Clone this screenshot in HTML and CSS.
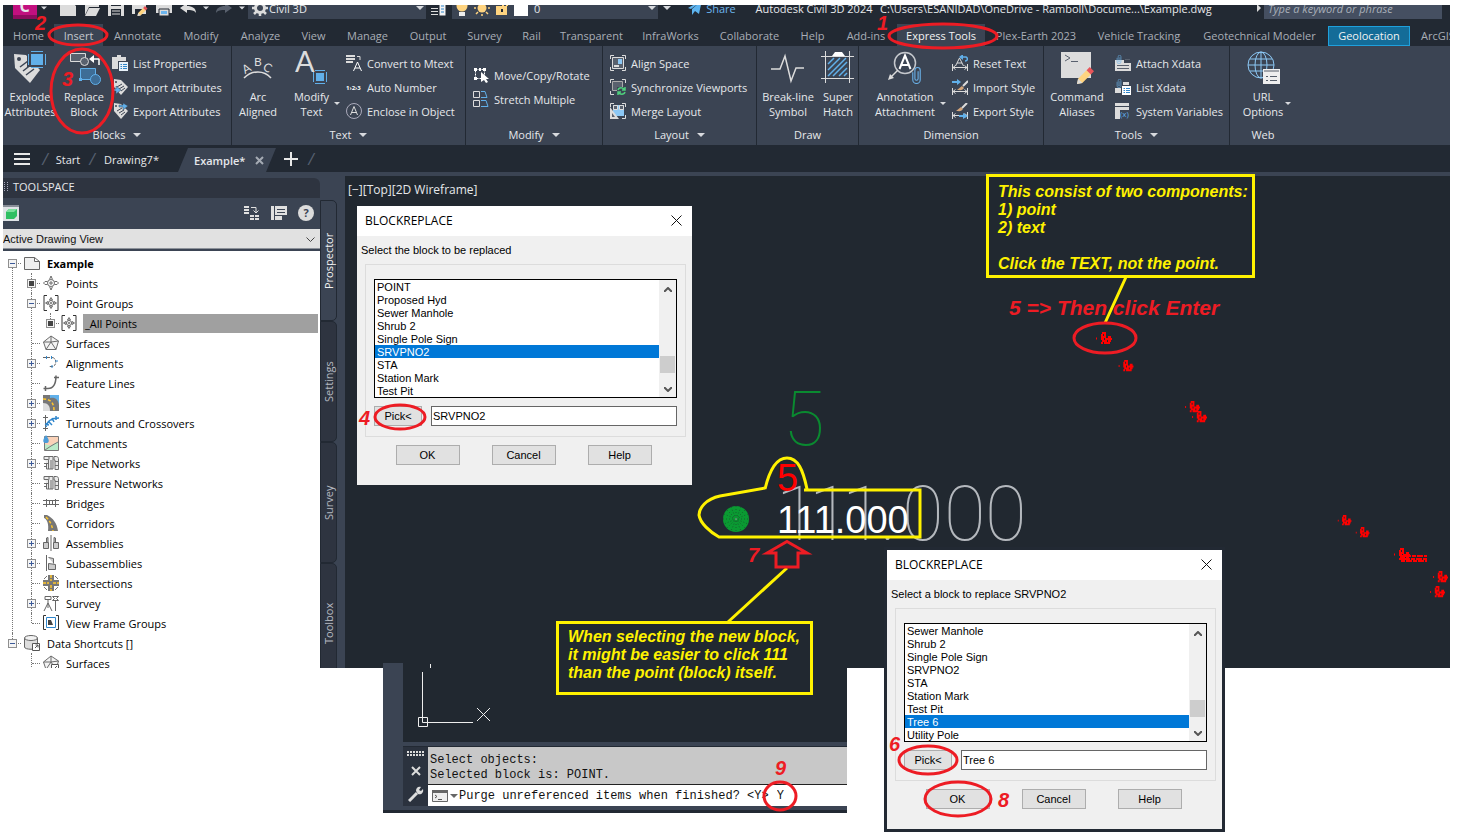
FILE: index.html
```
<!DOCTYPE html>
<html lang="en">
<head>
  <meta charset="UTF-8">
  <title>Autodesk Civil 3D 2024 - Example.dwg</title>
  <link rel="stylesheet" href="styles.css">
</head>
<body>
  <!-- shared icons -->
  <svg class="defs" width="0" height="0">
    <symbol id="i-tri" viewBox="0 0 8 4"><path d="M0 0h8L4 4z" fill="#d8dade"/></symbol>
    <symbol id="i-points" viewBox="0 0 16 16"><g fill="none" stroke="#6b6b6b"><circle cx="8" cy="8" r="3.500"/><path d="M6.500 4.500L8 1l1.500 3.500M6.500 11.500L8 15l1.500-3.500M4.500 6.500H2L.5 8 2 9.500h2.500M11.500 6.500H14L15.500 8 14 9.500h-2.500M8 6v4M6 8h4"/></g></symbol>
    <symbol id="i-group" viewBox="0 0 16 16"><path d="M4 .5H1v15h3M12 .5h3v15h-3" fill="none" stroke="#333"/><g fill="none" stroke="#6b6b6b"><circle cx="8" cy="8" r="2.500"/><path d="M8 2.500L9.500 5h-3zM8 13.500L9.500 11h-3zM2.500 8L5 6.500v3zM13.500 8L11 6.500v3zM8 7v2M7 8h2"/></g></symbol>
    <symbol id="i-surface" viewBox="0 0 16 16"><path d="M8 1l7.500 5L13 14.500H3L.5 7zM8 1v6L3 14.500M8 7l5 7.500M8 7L.5 7M8 7l7.500-1" fill="#f3f3f3" stroke="#6b6b6b"/></symbol>
    <symbol id="i-pipe" viewBox="0 0 16 16"><path d="M1 1.500h9v12.500H3.500V9M1 1.500v3h4.500V14M6 1.500v3M8 5v9M1 8.500h4.500M1 11.500h2.500M11 1.500h2.500c1 0 2 1 2 2v11h-3.500V5H11zM12 6.500h3.500M12 10.500h3.500" fill="#eaeaea" stroke="#6b6b6b"/></symbol>
    <symbol id="i-list" viewBox="0 0 16 16"><path d="M0 2h5V0h4v2h5v4H6v8H0z" fill="#dcdcdc"/><path d="M7 7h9v9H7z" fill="#e8f2fa"/><path d="M8.500 9.500h1.500M11 9.500h4M8.500 11.500h1.500M11 11.500h4M8.500 13.500h1.500M11 13.500h4" stroke="#2f86cc"/></symbol>
    <symbol id="i-tag" viewBox="0 0 16 16"><path d="M2 0l7 1 7 7-7 8-7-8z" fill="#dcdcdc"/><circle cx="4" cy="3" r="1" fill="#3b4453"/><path d="M5 8l5-3M7 10l5-3M9 12l4-3" stroke="#3b4453"/></symbol>
    <symbol id="i-dim" viewBox="0 0 16 16"><path d="M.5 9v7M15.500 9v7M1 12.500h14M3.500 10.500l-2.500 2 2.500 2M12.500 10.500l2.500 2-2.500 2" fill="none" stroke="#dcdcdc"/></symbol>
    <symbol id="i-frame" viewBox="0 0 16 16"><path d="M4 .5H.5V4M12 .5h3.500V4M.5 12v3.500H4M12 15.500h3.500V12" fill="none" stroke="#dcdcdc"/></symbol>
    <symbol id="i-pencil" viewBox="0 0 16 16"><path d="M0 16l1-5 8-8 4 4-8 8z" fill="#ffd480"/><path d="M9 3l3-3 4 4-3 3z" fill="#e8555a"/><path d="M0 16l1-5 4 4z" fill="#dcdcdc"/></symbol>
    <symbol id="i-clip" viewBox="0 0 8 16"><path d="M5.500 4v7a1.500 1.500 0 01-3 0V3a2.500 2.500 0 015 0v9a3.500 3.500 0 01-7 0V5" fill="none" stroke="#6cb5ee"/></symbol>
    <!-- survey points that are too small to read -->
    <symbol id="i-dot" viewBox="0 0 18 14"><path d="M0 6.500h1M6 1h4M5 3h2M8 3h2M5 5h5M12 5h3M5 7h3M9 7h7M6 9h5M12 9h3M5 11h2M8 11h6" stroke="#f00" stroke-width="2"/></symbol>
  </svg>

  <div class="app">
    <header class="titlebar">
      <div class="quick">
        <span class="logo"><b>C</b><svg width="6" height="4"><use href="#i-tri"/></svg></span>
        <button aria-label="New"><svg width="16" height="16"><path d="M0 1h10l6 5v10H0z" fill="#dcdcdc"/></svg></button>
        <button aria-label="Open"><svg width="16" height="16"><path d="M1 3h7l2 2h5v2H5L1 15z" fill="#dcdcdc"/><path d="M5 8h11l-4 8H1z" fill="#dcdcdc"/></svg></button>
        <button aria-label="Save"><svg width="16" height="16"><path d="M0 0h16v16H0z" fill="#dcdcdc"/><path d="M3 0h10v6H3zM3 9h10v7H3z" fill="#222933"/><path d="M4 11h8M4 14h8" stroke="#dcdcdc"/></svg></button>
        <button aria-label="Save As"><svg width="16" height="16"><path d="M0 1h14v13H0z" fill="#dcdcdc"/><path d="M3 9h7v5H3z" fill="#222933"/><use href="#i-pencil" x="5" y="6" width="11" height="10"/></svg></button>
        <button aria-label="Print"><svg width="16" height="16"><path d="M0 5h16v8H0zM3 0h10v4H3z" fill="#dcdcdc"/><path d="M3 9h10v7H3z" fill="#dcdcdc" stroke="#222933"/><path d="M5 11h6v3H5z" fill="#6cb5ee"/></svg></button>
        <button aria-label="Undo"><svg width="16" height="16"><path d="M0 8l7-5v3c5 0 9 2 9 7-2-3-5-3-9-3v3z" fill="#dcdcdc"/></svg></button>
        <svg width="6" height="4"><use href="#i-tri"/></svg>
        <button aria-label="Redo"><svg width="16" height="16"><path d="M16 8L9 3v3C4 6 0 8 0 13c2-3 5-3 9-3v3z" fill="#59616e"/></svg></button>
        <svg width="6" height="4"><use href="#i-tri"/></svg>
        <div class="field"><svg width="16" height="16"><circle cx="8" cy="8" r="4.500" fill="none" stroke="#dcdcdc" stroke-width="3"/><path d="M8 0v4M8 12v4M0 8h4M12 8h4M2 2l3 3M11 11l3 3M14 2l-3 3M5 11l-3 3" stroke="#dcdcdc" stroke-width="2.500"/></svg><span>Civil 3D</span><svg class="end" width="8" height="4"><use href="#i-tri"/></svg></div>
        <svg width="16" height="16"><path d="M0 8.500h7M0 11.500h7M0 14.500h7" stroke="#dcdcdc"/><path d="M8.500 2.500h6v13h-6z" fill="#f4f4f4"/><path d="M10 6h3M10 9h3M10 12h3" stroke="#2f86cc"/></svg>
        <div class="field layer">
          <svg width="12" height="16"><circle cx="6" cy="6" r="5.500" fill="#ffd480"/><path d="M3 12h6v4H3z" fill="#eee"/></svg>
          <svg width="16" height="16"><circle cx="8" cy="8" r="4.500" fill="#ffd480"/><path d="M8 0v2M8 14v2M0 8h2M14 8h2M2 2l2 2M12 12l2 2M14 2l-2 2M4 12l-2 2" stroke="#ffd480" stroke-width="1.500"/></svg>
          <svg width="12" height="16"><path d="M0 6h11v9H0z" fill="#ffd480"/><path d="M7 6V2h4v4" fill="none" stroke="#ffd480" stroke-width="2"/><path d="M5 9h2v3H5z" fill="#222933"/></svg>
          <i class="swatch"></i><span>0</span><svg class="end" width="8" height="4"><use href="#i-tri"/></svg>
        </div>
        <svg width="8" height="4"><use href="#i-tri"/></svg>
        <a class="share" href="#share"><svg width="14" height="16"><path d="M0 8L14 0l-3 14-4-3-3 4V9l7-6-8 6z" fill="#5db4f0"/></svg>Share</a>
        <span>Autodesk Civil 3D 2024</span>
        <span class="path">C:\Users\ESANIDAD\OneDrive - Ramboll\Docume...\Example.dwg</span>
        <svg width="4" height="8"><path d="M0 0v8l4-4z" fill="#dcdcdc"/></svg>
        <input class="search" type="text" placeholder="Type a keyword or phrase" aria-label="Search">
      </div>
    </header>

    <nav class="tabs">
      <a href="#home">Home</a>
      <a href="#insert" class="on dim">Insert</a>
      <a href="#annotate">Annotate</a>
      <a href="#modify">Modify</a>
      <a href="#analyze">Analyze</a>
      <a href="#view">View</a>
      <a href="#manage">Manage</a>
      <a href="#output">Output</a>
      <a href="#survey">Survey</a>
      <a href="#rail">Rail</a>
      <a href="#transparent">Transparent</a>
      <a href="#infraworks">InfraWorks</a>
      <a href="#collaborate">Collaborate</a>
      <a href="#help">Help</a>
      <a href="#addins">Add-ins</a>
      <a href="#express" class="on">Express Tools</a>
      <a href="#plex">Plex-Earth 2023</a>
      <a href="#vehicle">Vehicle Tracking</a>
      <a href="#geotech">Geotechnical Modeler</a>
      <a href="#geolocation" class="geo">Geolocation</a>
      <a href="#arcgis" class="last">ArcGIS</a>
    </nav>

    <div class="ribbon">
      <section class="panel blocks">
        <div class="tools">
          <button class="big"><svg width="34" height="34"><path d="M1 3l12 1 14 15-10 13L2 17z" fill="#dcdcdc"/><circle cx="6" cy="8" r="2" fill="#3b4453"/><path d="M7 16l8-6M10 20l9-7M13 24l8-6" stroke="#3b4453" stroke-width="1.500"/><path d="M14 1h20v15H14z" fill="#3b4453"/><path d="M18 3h12v11H18z" fill="#61b0ea"/><path d="M18 .5h12M18 16.500h12M15.500 3v11M32.500 3v11" stroke="#61b0ea"/></svg><span>Explode<br>Attributes</span></button>
          <button class="big"><svg width="34" height="34"><g fill="#59616e" stroke="#dcdcdc"><path d="M3.500 2.500h15v8h-15z"/><circle cx="17.500" cy="10.500" r="4"/></g><path d="M32 14V8h-7" fill="none" stroke="#fff" stroke-width="1.500"/><path d="M22 8l5-4v8z" fill="#fff"/><g fill="#3e6d96" stroke="#61b0ea"><path d="M13.500 17.500h15v11h-15z"/><circle cx="28.500" cy="28.500" r="5"/></g><path d="M12 27h3v3h-3z" fill="#61b0ea"/></svg><span>Replace<br>Block</span></button>
          <div class="list">
            <button><svg width="16" height="16"><use href="#i-list"/></svg>List Properties</button>
            <button><svg width="16" height="16"><use href="#i-tag"/><path d="M0 10h4V7l5 4-5 4v-3H0z" fill="#61b0ea" stroke="#3b4453" stroke-width=".5"/></svg>Import Attributes</button>
            <button><svg width="16" height="16"><use href="#i-tag"/><path d="M7 2h4V0l5 3-5 4V4H7z" fill="#61b0ea" stroke="#3b4453" stroke-width=".5"/></svg>Export Attributes</button>
          </div>
        </div>
        <h2>Blocks <svg width="8" height="4"><use href="#i-tri"/></svg></h2>
      </section>
      <section class="panel text">
        <div class="tools">
          <button class="big"><svg width="34" height="34"><path d="M3 27c8-8 20-8 27 0" fill="none" stroke="#dcdcdc" stroke-width="1.500"/><g fill="#dcdcdc" font-family="Lato" font-size="12"><text x="1" y="22" transform="rotate(-30 5 17)">A</text><text x="13" y="15">B</text><text x="23" y="21" transform="rotate(30 27 16)">C</text></g></svg><span>Arc<br>Aligned</span></button>
          <button class="big more"><svg width="34" height="34"><text x="0" y="21" fill="#dcdcdc" font-family="Lato" font-size="29">A</text><path d="M21 22h8v8h-8z" fill="#61b0ea"/><path d="M20 19.500h10M20 32.500h10M18.500 21v10M31.500 21v10" stroke="#61b0ea"/></svg><span>Modify<br>Text</span></button>
          <div class="list">
            <button><svg width="16" height="16"><path d="M0 1h9M0 4h9M0 7h7" stroke="#dcdcdc" stroke-width="2"/><path d="M11 1.500h3V5" stroke="#dcdcdc" fill="none"/><path d="M7.500 16l4-9 4 9M9 13h5" stroke="#fff" fill="none"/></svg>Convert to Mtext</button>
            <button><svg width="16" height="16"><text x="0" y="11" fill="#fff" font-family="Open Sans" font-weight="bold" font-size="6">1›2›3</text></svg>Auto Number</button>
            <button><svg width="16" height="16"><circle cx="8" cy="8" r="7.500" fill="none" stroke="#aab"/><path d="M4.500 12L8 3.500l3.500 8.500M6 9.500h4" fill="none" stroke="#dcdcdc"/></svg>Enclose in Object</button>
          </div>
        </div>
        <h2>Text <svg width="8" height="4"><use href="#i-tri"/></svg></h2>
      </section>
      <section class="panel modify">
        <div class="tools">
          <div class="list">
            <button><svg width="16" height="16"><path d="M2.500 2.500h9v9h-9z" fill="none" stroke="#fff" stroke-dasharray="2 1"/><path d="M1 1h3v3H1zM6 1h2v3H6zM10 1h3v3h-3zM1 10h3v3H1z" fill="#fff"/><path d="M8 5v10l3-2 2 3 2-1-2-3h3z" fill="#fff"/></svg>Move/Copy/Rotate</button>
            <button><svg width="16" height="16"><path d="M.5.5h6v6h-6zM.5 9.500h6v6h-6z" fill="none" stroke="#dcdcdc"/><path d="M8 .5h4l2 6H8M8 9.500h5l2 6H8" fill="none" stroke="#61b0ea"/></svg>Stretch Multiple</button>
          </div>
        </div>
        <h2>Modify <svg width="8" height="4"><use href="#i-tri"/></svg></h2>
      </section>
      <section class="panel layout">
        <div class="tools">
          <div class="list">
            <button><svg width="16" height="16"><use href="#i-frame"/><path d="M2.500 2.500h11v11h-11z" fill="#59616e" stroke="#dcdcdc"/><path d="M8 4h4v5H8z" fill="#8cc8f5"/><path d="M4 10h5v2H4z" fill="#dcdcdc"/></svg>Align Space</button>
            <button><svg width="16" height="16"><use href="#i-frame"/><path d="M2.500 2.500h10v9h-10z" fill="#59616e" stroke="#aaa"/><path d="M7 8h9v8H7z" fill="#3b4453"/><path d="M8 11c1-3 5-3 7 0M15 8v3h-3M15 13c-1 3-5 3-7 0M8 16v-3h3" fill="none" stroke="#4fd07d" stroke-width="1.500"/></svg>Synchronize Viewports</button>
            <button><svg width="16" height="16"><use href="#i-frame"/><path d="M3 2h11v11H3z" fill="#8cc8f5"/><path d="M3.500 2.500h4v4h-4zM9.500 2.500h4v4h-4z" fill="#59616e" stroke="#dcdcdc"/><path d="M0 4v12h9z" fill="#dcdcdc"/><path d="M2 10v4h3z" fill="#59616e"/></svg>Merge Layout</button>
          </div>
        </div>
        <h2>Layout <svg width="8" height="4"><use href="#i-tri"/></svg></h2>
      </section>
      <section class="panel draw">
        <div class="tools">
          <button class="big"><svg width="34" height="34"><path d="M0 18h9l5-13 6 25 5-13h8" fill="none" stroke="#dcdcdc" stroke-width="1.500"/></svg><span>Break-line<br>Symbol</span></button>
          <button class="big"><svg width="34" height="34"><path d="M4.500 0v32M28.500 0v32M0 5.500h33M0 27.500h33" stroke="#dcdcdc"/><path d="M7 13l6-6M7 19L19 7M7 25L25 7M12 25L26 11M18 25l8-8M23 25l3-3" stroke="#61b0ea" stroke-width="1.500"/><path d="M11 5l3-4h7l3 4z" fill="#fff"/></svg><span>Super<br>Hatch</span></button>
        </div>
        <h2>Draw</h2>
      </section>
      <section class="panel dimension">
        <div class="tools">
          <button class="big more"><svg width="34" height="34"><circle cx="17" cy="12" r="10.500" fill="none" stroke="#c5c8cd" stroke-width="1.500"/><path d="M11.500 18L17 4.500 22.500 18M13.500 14h7" fill="none" stroke="#fff" stroke-width="2"/><path d="M10 19L3 26" stroke="#dcdcdc" stroke-width="1.500"/><path d="M0 29l2-6 4 4z" fill="#dcdcdc"/><use href="#i-clip" x="24" y="16" width="9" height="17"/></svg><span>Annotation<br>Attachment</span></button>
          <div class="list">
            <button><svg width="16" height="16"><use href="#i-dim"/><path d="M3.500 11l4-8 4 8M5 8h5" stroke="#dcdcdc" fill="none"/><path d="M9 2h5c2 1 2 4-1 4" stroke="#61b0ea" fill="none" stroke-width="1.500"/><path d="M7 2l4-3v6z" fill="#61b0ea"/></svg>Reset Text</button>
            <button><svg width="16" height="16"><use href="#i-dim"/><path d="M0 2h5V0l4 3-4 3V4H0z" fill="#61b0ea"/><path d="M5 11l5-4 2 2c-2 3-4 2-7 2z" fill="#d6a67a"/><path d="M11 7l5-5" stroke="#dcdcdc" stroke-width="2"/></svg>Import Style</button>
            <button><svg width="16" height="16"><use href="#i-dim"/><path d="M4 8l5-4 2 2c-2 3-4 2-7 2z" fill="#d6a67a"/><path d="M10 5l5-5" stroke="#dcdcdc" stroke-width="2"/><path d="M7 12h4v-2l5 3-5 3v-2H7z" fill="#61b0ea"/></svg>Export Style</button>
          </div>
        </div>
        <h2>Dimension</h2>
      </section>
      <section class="panel toolset">
        <div class="tools">
          <button class="big"><svg width="34" height="34"><path d="M1 1h30v26H1z" fill="#dcdcdc"/><path d="M5 4l5 3-5 3M11 10.500h7" fill="none" stroke="#59616e"/><use href="#i-pencil" x="17" y="16" width="17" height="17"/></svg><span>Command<br>Aliases</span></button>
          <div class="list">
            <button><svg width="16" height="16"><path d="M0 5h9v3h7v8H0z" fill="#dcdcdc"/><path d="M2 10.500h12M2 13.500h12M10 4.500h5" stroke="#59616e"/><use href="#i-clip" x="1" width="6" height="9"/></svg>Attach Xdata</button>
            <button><svg width="16" height="16"><path d="M0 9h6v5H0zM8 3h6v3H8z" fill="#dcdcdc"/><use href="#i-clip" x="1" width="6" height="9"/><path d="M7 7h9v9H7z" fill="#fff"/><path d="M8.500 9.500h1.500M11 9.500h4M8.500 11.500h1.500M11 11.500h4M8.500 13.500h1.500M11 13.500h4" stroke="#2f86cc"/></svg>List Xdata</button>
            <button><svg width="16" height="16"><path d="M0 0h14v3H0zM0 4h14v3H5v9H0z" fill="#dcdcdc"/><text x="5" y="14" fill="#61b0ea" font-family="Open Sans" font-size="8">(x)</text></svg>System Variables</button>
          </div>
        </div>
        <h2>Tools <svg width="8" height="4"><use href="#i-tri"/></svg></h2>
      </section>
      <section class="panel web">
        <div class="tools">
          <button class="big more"><svg width="34" height="34"><g fill="none" stroke="#8cc8f5"><circle cx="15" cy="14" r="13"/><ellipse cx="15" cy="14" rx="6" ry="13"/><path d="M15 1v26M2 14h26M4 8h22M4 20h22"/></g><path d="M17 18h17v15H17z" fill="#eee"/><path d="M18 20h15M20 25.500h2M24 25.500h7M20 29.500h2M24 29.500h7" stroke="#555d69"/></svg><span>URL<br>Options</span></button>
        </div>
        <h2>Web</h2>
      </section>
    </div>

    <nav class="files">
      <button aria-label="Menu"><svg width="16" height="12"><path d="M0 1h16M0 6h16M0 11h16" stroke="#e8e8e8" stroke-width="2"/></svg></button>
      <i>/</i>
      <a href="#start">Start</a>
      <i>/</i>
      <a href="#drawing7" class="d7">Drawing7*</a>
      <a href="#example" class="current">Example* <svg width="9" height="9"><path d="M1 1l7 7M8 1L1 8" stroke="#a5abb4" stroke-width="2"/></svg></a>
      <button aria-label="New drawing"><svg width="14" height="14"><path d="M7 0v14M0 7h14" stroke="#e8e8e8" stroke-width="2"/></svg></button>
      <i>/</i>
    </nav>

    <main class="work">
      <aside class="toolspace">
        <h1><svg width="5" height="10"><path d="M1.500 0v10M4.500 0v10" stroke="#aab" stroke-dasharray="1 1"/></svg>TOOLSPACE</h1>
        <div class="bar">
          <svg width="16" height="16"><path d="M0 0h16v2H0z" fill="#888e98"/><path d="M0 2h16v14H0z" fill="#dfe3e6"/><path d="M3 7l3-3h8v7l-3 3H3z" fill="#2fbf63"/><path d="M3 7l3-3h8l-3 3z" fill="#7be09d"/></svg>
          <span class="grow"></span>
          <button aria-label="Panorama"><svg width="16" height="16"><path d="M0 2h5M0 5h5M0 8h5M6 11h4M11 11h4M6 14h4M11 14h4" stroke="#e0e0e0" stroke-width="2"/><path d="M7 2.500h5V8M9.500 5.500l2.500 2.500 2.500-2.500" stroke="#e0e0e0" fill="none"/></svg></button>
          <button aria-label="Preview"><svg width="16" height="16"><path d="M0 1h3v14H0zM4 1h12v9H4zM4 11h8v4H4z" fill="#e0e0e0"/><path d="M6 4.500h8M6 7.500h8M11.500 10v5" stroke="#3b4453"/></svg></button>
          <button class="help" aria-label="Help">?</button>
        </div>
        <div class="view"><select aria-label="View"><option>Active Drawing View</option></select><svg width="9" height="5"><path d="M.5.5l4 4 4-4" fill="none" stroke="#444"/></svg></div>
        <ul class="tree">
          <li><div class="row"><i class="tg minus"></i><svg width="16" height="16"><path d="M.5 2.500h10l5 4v8H.5zM10.500 2.500v4h5" fill="#f0f0f0" stroke="#666"/></svg><b>Example</b></div>
            <ul>
              <li><div class="row"><i class="tg dot"></i><svg width="16" height="16"><use href="#i-points"/></svg>Points</div></li>
              <li><div class="row"><i class="tg minus"></i><svg width="16" height="16"><use href="#i-group"/></svg>Point Groups</div>
                <ul>
                  <li><div class="row picked"><i class="tg dot"></i><svg width="16" height="16"><use href="#i-group"/></svg><span>_All Points</span></div></li>
                </ul>
              </li>
              <li><div class="row"><i class="tg"></i><svg width="16" height="16"><use href="#i-surface"/></svg>Surfaces</div></li>
              <li><div class="row"><i class="tg plus"></i><svg width="16" height="16"><path d="M0 2.500h9M9 2.500c5 0 5 9 0 9H6" fill="none" stroke="#666" stroke-dasharray="3 1"/><path d="M3.500 1v3M8.500 1v3M12 6h3M9 10v3" stroke="#2f86cc"/></svg>Alignments</div></li>
              <li><div class="row"><i class="tg"></i><svg width="16" height="16"><path d="M2 13.500h3c6 0 8-6 8-13M.5 13.500h4M11 2.500h5M2.500 11v5" fill="none" stroke="#666" stroke-width="1.500"/></svg>Feature Lines</div></li>
              <li><div class="row"><i class="tg plus"></i><svg width="16" height="16"><path d="M0 0h16v16H0z" fill="#777"/><path d="M7 0h9v10c-1-6-4-8-9-7z" fill="#61b0ea"/><path d="M0 8c5 0 7 3 7 8H0z" fill="#ddd"/><path d="M0 4c8 0 11 4 11 12" fill="none" stroke="#ffc62b" stroke-width="1.500" stroke-dasharray="3 2"/></svg>Sites</div></li>
              <li><div class="row"><i class="tg plus"></i><svg width="16" height="16"><path d="M2.500 0v16M0 2.500h5M0 13.500h5" stroke="#666"/><path d="M3 12c1-6 5-9 13-9M5 6l4 4M9 3l2 4M13 1v4M2 9l4 1" fill="none" stroke="#2f86cc" stroke-width="1.500"/></svg>Turnouts and Crossovers</div></li>
              <li><div class="row"><i class="tg"></i><svg width="16" height="16"><path d="M1.500 1.500h14v14h-14z" fill="#fad2b8" stroke="#777"/><path d="M2 15V9c4 2 4 0 6 2 3-3 5-4 7-4v8z" fill="#b9ecc9"/><path d="M2 15l6-4 7-4" stroke="#777" fill="none"/><path d="M3 0c5 7 2 8 0 8s-5-1 0-8z" fill="#4b9cd8"/></svg>Catchments</div></li>
              <li><div class="row"><i class="tg plus"></i><svg width="16" height="16"><use href="#i-pipe"/></svg>Pipe Networks</div></li>
              <li><div class="row"><i class="tg"></i><svg width="16" height="16"><use href="#i-pipe"/></svg>Pressure Networks</div></li>
              <li><div class="row"><i class="tg"></i><svg width="16" height="16"><path d="M0 5.500h16M0 9.500h16M3.500 4v8M12.500 4v8M6.500 6v3M9.500 6v3" stroke="#666"/></svg>Bridges</div></li>
              <li><div class="row"><i class="tg"></i><svg width="16" height="16"><path d="M1 0h3c6 3 10 8 11 16H5C6 9 4 4 1 3z" fill="#777"/><path d="M3 2c4 4 6 8 7 14" fill="none" stroke="#ffc62b" stroke-width="1.500" stroke-dasharray="3 2"/></svg>Corridors</div></li>
              <li><div class="row"><i class="tg plus"></i><svg width="16" height="16"><path d="M8 0v16" stroke="#666"/><path d="M.5 7.500h5v6h-5zM10.500 7.500h5v6h-5zM5 7.500v-5L3.500 3v4M11 7.500v-5l1.500.5v4" fill="#ccc" stroke="#666"/></svg>Assemblies</div></li>
              <li><div class="row"><i class="tg plus"></i><svg width="16" height="16"><path d="M3.500 0v16" stroke="#666"/><path d="M5.500 8.500l7 1v5h-7zM5.500 2.500l5 1v5" fill="#ccc" stroke="#666"/></svg>Subassemblies</div></li>
              <li><div class="row"><i class="tg"></i><svg width="16" height="16"><path d="M5 0h6v5h5v6h-5v5H5v-5H0V5h5z" fill="#777"/><path d="M0 8h6M10 8h6M8 0v6M8 10v6" stroke="#ffc62b" stroke-width="1.500" stroke-dasharray="3 1"/><path d="M1 4l3-3M12 1l3 3M1 12l3 3M12 15l3-3" stroke="#777"/></svg>Intersections</div></li>
              <li><div class="row"><i class="tg plus"></i><svg width="16" height="16"><path d="M2 1.500h6v3H2zM5 5v3M5 8L1 16M5 8l4 8M5 8v5M9.500 1.500h6l-2 2 2 2h-6l2-2zM12.500 6v10" fill="none" stroke="#666"/></svg>Survey</div></li>
              <li><div class="row"><i class="tg"></i><svg width="16" height="16"><path d="M3 .5H.5v14H3M13 .5h2.500v14H13" fill="none" stroke="#333"/><path d="M3.500 2.500h9v10h-9z" fill="#fff" stroke="#2f86cc"/><path d="M5 5h3l2 5H5z" fill="#444"/></svg>View Frame Groups</div></li>
            </ul>
          </li>
          <li><div class="row"><i class="tg minus"></i><svg width="16" height="16"><path d="M.5 3v9c0 3 13 3 13 0V3" fill="#ddd" stroke="#666"/><ellipse cx="7" cy="3" rx="6.500" ry="2.500" fill="#f2f2f2" stroke="#666"/><path d="M8.500 8.500h7v7h-7zM11 13l3-3M11.500 10H14v2.500" fill="#fff" stroke="#555"/></svg>Data Shortcuts []</div>
            <ul>
              <li class="more-below"><div class="row"><i class="tg"></i><svg width="16" height="16"><use href="#i-surface"/><path d="M8.500 9.500h7v7h-7zM11 14l3-3" fill="#fff" stroke="#555"/></svg>Surfaces</div></li>
            </ul>
          </li>
        </ul>
      </aside>
      <nav class="side">
        <a href="#prospector" class="on">Prospector</a>
        <a href="#settings">Settings</a>
        <a href="#survey-tab">Survey</a>
        <a href="#toolbox">Toolbox</a>
      </nav>
      <div class="canvas"><p>[&#8722;][Top][2D Wireframe]</p></div>
    </main>
  </div>

  <section class="command">
    <div class="model"></div>
    <div class="cmd">
      <div class="grip">
        <svg width="18" height="5"><path d="M0 1h18M0 4h18" stroke="#dcdcdc" stroke-width="2" stroke-dasharray="2 1"/></svg>
        <button aria-label="Close"><svg width="10" height="10"><path d="M1 1l8 8M9 1L1 9" stroke="#dcdcdc" stroke-width="2"/></svg></button>
        <button aria-label="Customize"><svg width="16" height="16"><path d="M1 15L9 7" stroke="#dcdcdc" stroke-width="3"/><path d="M8 5c0-3 2-5 5-4l-2 3 2 1 2-2c1 4-2 6-5 5z" fill="#dcdcdc"/></svg></button>
      </div>
      <div class="console">
        <p>Select objects:<br>Selected block is: POINT.</p>
        <form class="prompt">
          <svg width="26" height="12"><path d="M.5.5h15v11H.5z" fill="#eee" stroke="#666"/><path d="M0 0h16v3H0z" fill="#666"/><path d="M3 5l2 1.500L3 8M6 9.500h4" stroke="#555" fill="none"/><path d="M18 4h8l-4 4z" fill="#666"/></svg>
          <label for="answer">Purge unreferenced items when finished? &lt;Y&gt;</label>
          <input id="answer" type="text" value="Y">
        </form>
      </div>
    </div>
    <div class="status"></div>
  </section>

  <form class="dialog first">
    <header>BLOCKREPLACE <button type="button" aria-label="Close"><svg width="11" height="11"><path d="M.5.5l10 10M10.500.5l-10 10" stroke="#111"/></svg></button></header>
    <label for="blocks1">Select the block to be replaced</label>
    <fieldset>
      <div class="listbox">
        <select id="blocks1" size="9">
          <option>POINT</option>
          <option>Proposed Hyd</option>
          <option>Sewer Manhole</option>
          <option>Shrub 2</option>
          <option>Single Pole Sign</option>
          <option selected>SRVPNO2</option>
          <option>STA</option>
          <option>Station Mark</option>
          <option>Test Pit</option>
        </select>
        <div class="scroll"><svg width="8" height="5"><path d="M0 5l4-4 4 4" fill="none" stroke="#555" stroke-width="2"/></svg><i></i><svg width="8" height="5"><path d="M0 0l4 4 4-4" fill="none" stroke="#555" stroke-width="2"/></svg></div>
      </div>
      <div class="pick"><button type="button">Pick&lt;</button><input type="text" value="SRVPNO2" aria-label="Block name"></div>
    </fieldset>
    <div class="actions"><button type="button">OK</button><button type="button">Cancel</button><button type="button">Help</button></div>
  </form>

  <form class="dialog second">
    <header>BLOCKREPLACE <button type="button" aria-label="Close"><svg width="11" height="11"><path d="M.5.5l10 10M10.500.5l-10 10" stroke="#111"/></svg></button></header>
    <label for="blocks2">Select a block to replace SRVPNO2</label>
    <fieldset>
      <div class="listbox">
        <select id="blocks2" size="9">
          <option>Sewer Manhole</option>
          <option>Shrub 2</option>
          <option>Single Pole Sign</option>
          <option>SRVPNO2</option>
          <option>STA</option>
          <option>Station Mark</option>
          <option>Test Pit</option>
          <option selected>Tree 6</option>
          <option>Utility Pole</option>
        </select>
        <div class="scroll"><svg width="8" height="5"><path d="M0 5l4-4 4 4" fill="none" stroke="#555" stroke-width="2"/></svg><i></i><svg width="8" height="5"><path d="M0 0l4 4 4-4" fill="none" stroke="#555" stroke-width="2"/></svg></div>
      </div>
      <div class="pick"><button type="button">Pick&lt;</button><input type="text" value="Tree 6" aria-label="Block name"></div>
    </fieldset>
    <div class="actions"><button type="button">OK</button><button type="button">Cancel</button><button type="button">Help</button></div>
  </form>

  <p class="callout one">This consist of two components:<br>1) point<br>2) text<br><br>Click the TEXT, not the point.</p>
  <p class="callout two">When selecting the new block,<br>it might be easier to click 111<br>than the point (block) itself.</p>

  <!-- drawing content and the step marks over it -->
  <svg class="marks" width="1457" height="837">
    <g class="thin">
      <text class="green" x="783" y="445">5</text>
      <text x="776 809 842" y="540">111</text>
      <text x="880 902 944 985" y="540">.000</text>
    </g>
    <circle cx="736" cy="519" r="13" fill="#0a9a32"/>
    <path d="M736 506v26M723 519h26M727 510l18 18M745 510l-18 18M731 507l10 24M741 507l-10 24M724 514l24 10M748 514l-24 10" stroke="#16602f" stroke-dasharray="1 2"/>
    <path d="M735.500 519h1" stroke="#fff"/>
    <text class="plain" x="777" y="491" fill="#f00">5</text>
    <text class="plain" x="777" y="533" fill="#fff">111.000</text>

    <use href="#i-dot" x="1096" y="332" width="18" height="14"/>
    <use href="#i-dot" x="1118" y="360" width="18" height="13"/>
    <use href="#i-dot" x="1185" y="401" width="17" height="13"/>
    <use href="#i-dot" x="1192" y="411" width="17" height="13"/>
    <use href="#i-dot" x="1337" y="515" width="17" height="12"/>
    <use href="#i-dot" x="1355" y="527" width="17" height="12"/>
    <use href="#i-dot" x="1394" y="548" width="18" height="14"/>
    <path d="M1400 556h27M1399 559h29M1401 561h26" stroke="#f00" stroke-width="2" stroke-dasharray="4 1 6 1"/>
    <use href="#i-dot" x="1433" y="571" width="17" height="13"/>
    <use href="#i-dot" x="1430" y="586" width="17" height="13"/>

    <g fill="none" stroke="#eee">
      <path d="M418.500 717.500h9v9h-9zM422.500 672v50.500H473M430.500 664v4"/>
      <path d="M477 708l13 13M490 708l-13 13"/>
    </g>

    <g fill="none" stroke="#fff200" stroke-width="3">
      <path d="M765 489C770 468 778 458 787 458C798 458 803 470 807 489M765 488L720 496C706 499 699 508 699 515C700 523 710 532 719 537H920V490H804"/>
      <path d="M728 622L787 568M1126 277L1105 323"/>
    </g>
    <path class="red" d="M787 541.500L807 553H798V567H776V553H767z"/>

    <g class="red">
      <ellipse cx="943" cy="36" rx="54" ry="12"/>
      <ellipse cx="78" cy="35" rx="29" ry="10"/>
      <ellipse cx="82" cy="91" rx="31" ry="42"/>
      <ellipse cx="400" cy="417" rx="25" ry="12"/>
      <ellipse cx="1105" cy="338" rx="31" ry="15"/>
      <ellipse cx="928" cy="760" rx="29" ry="14"/>
      <ellipse cx="958" cy="799" rx="33" ry="17"/>
      <ellipse cx="780" cy="796" rx="16" ry="14"/>
    </g>
    <g class="step">
      <text x="877" y="30">1</text>
      <text x="35" y="30">2</text>
      <text x="62" y="86">3</text>
      <text x="359" y="425">4</text>
      <text class="wide" x="1009" y="315">5 =&gt; Then click Enter</text>
      <text x="889" y="751">6</text>
      <text x="748" y="562">7</text>
      <text x="998" y="807">8</text>
      <text x="775" y="775">9</text>
    </g>
  </svg>
</body>
</html>
```
FILE: styles.css
```
* {
  box-sizing: border-box;
}
body {
  position: relative;
  margin: 0;
  min-height: 100vh;
  background: #ffffff;
  font-family: "Open Sans", "Noto Sans", sans-serif;
  font-size: 11px;
  color: #111;
}
button, input, select {
  font: inherit;
  color: inherit;
  margin: 0;
}
button {
  background: none;
  border: none;
  padding: 0;
}
a {
  color: inherit;
  text-decoration: none;
}
svg {
  display: block;
  flex-shrink: 0;
}
h1, h2, p {
  margin: 0;
  font-size: 11px;
  font-weight: normal;
}
ul {
  list-style: none;
  margin: 0;
  padding: 0;
}
.defs {
  position: absolute;
}
.app {
  margin: 0 7px 0 3px;
  border-top: 5px solid #fff;
  height: 668px;
  background: #222933;
  color: #e6e8eb;
  display: flex;
  flex-direction: column;
  overflow: hidden;
}

/* title bar */
.titlebar {
  height: 19px;
  overflow: hidden;
  flex-shrink: 0;
}
.quick {
  margin-top: -8px;
  height: 21px;
  display: grid;
  grid-template-columns: 53px repeat(6, 24px) 12px 24px 12px 178px 26px 206px 18px 72px 132px 1fr 10px 178px 8px;
  align-items: center;
  justify-items: center;
  white-space: nowrap;
}
.quick .field {
  width: 100%;
  height: 21px;
  background: #3b4453;
  display: flex;
  align-items: center;
  padding: 0 2px 0 4px;
  gap: 1px;
}
.quick .layer {
  gap: 6px;
}
.quick .end {
  margin-left: auto;
}
.swatch {
  width: 14px;
  height: 16px;
  background: #fff;
}
.logo {
  display: flex;
  align-items: center;
  gap: 4px;
}
.logo b {
  width: 24px;
  height: 22px;
  background: #c2107f;
  border-bottom: 4px solid #8d0c5e;
  text-align: center;
  font-size: 16px;
  line-height: 18px;
}
.share {
  display: flex;
  align-items: center;
  gap: 4px;
  color: #6cb5ee;
}
.quick .path {
  justify-self: start;
}
.search {
  width: 100%;
  height: 21px;
  border: none;
  padding: 0 4px;
  background: #454f61;
  font-style: italic;
}
.search::placeholder {
  color: #a9afb9;
}

/* ribbon */
.tabs {
  display: grid;
  grid-template-columns: 51px 49px 69px 58px 61px 45px 63px 58px 55px 39px 81px 77px 81px 45px 62px 88px 102px 104px 137px 82px 1fr;
  height: 22px;
  line-height: 24px;
  flex-shrink: 0;
  text-align: center;
  color: #a9aeb6;
  white-space: nowrap;
}
.tabs .on {
  background: #3b4453;
  color: #f2f2f2;
}
.tabs .dim {
  color: #c4c8ce;
}
.tabs .geo {
  background: #146c98;
  border: 1px solid #1fa0dc;
  line-height: 18px;
  color: #f2f2f2;
  height: 20px;
  margin-top: 2px;
}
.tabs .last {
  text-align: left;
  padding-left: 11px;
  overflow: hidden;
}
.ribbon {
  display: flex;
  height: 99px;
  flex-shrink: 0;
  background: #3b4453;
}
.panel {
  border-right: 1px solid #222933;
  display: flex;
  flex-direction: column;
}
.blocks { width: 229px; }
.text { width: 234px; }
.modify { width: 137px; }
.layout { width: 154px; }
.draw { width: 102px; }
.dimension { width: 185px; }
.toolset { width: 186px; }
.web {
  width: 66px;
  border: none;
}
.tools {
  display: grid;
  height: 80px;
  padding-top: 5px;
}
.blocks .tools { grid-template-columns: 54px 54px 1fr; }
.text .tools { grid-template-columns: 52px 61px 1fr; }
.modify .tools, .layout .tools { padding-left: 6px; }
.draw .tools { grid-template-columns: 62px 38px; }
.dimension .tools { grid-template-columns: 92px 1fr; }
.toolset .tools { grid-template-columns: 70px 1fr; }
.modify .list { padding-top: 12px; }
.big {
  display: flex;
  flex-direction: column;
  align-items: center;
  gap: 4px;
  line-height: 15px;
  white-space: nowrap;
}
.more {
  position: relative;
}
.text .more {
  padding-right: 6px;
}
.toolset .big {
  padding-right: 4px;
}
.more::after {
  content: "";
  position: absolute;
  right: 5px;
  bottom: 21px;
  border: 3px solid transparent;
  border-top-color: #d8dade;
  border-bottom: none;
}
.list button {
  display: flex;
  align-items: center;
  gap: 5px;
  height: 24px;
  padding-left: 1px;
  white-space: nowrap;
}
.panel h2 {
  display: flex;
  justify-content: center;
  align-items: center;
  gap: 8px;
  line-height: 18px;
}

/* drawing tabs */
.files {
  display: grid;
  grid-template-columns: 38px 8px 38px 10px 81px 98px 30px 10px;
  align-items: center;
  height: 27px;
  padding-top: 1px;
  flex-shrink: 0;
  text-align: center;
}
.files svg {
  margin: auto;
}
.files i {
  color: #566070;
  font-size: 16px;
}
.files .d7 {
  text-align: left;
  padding-left: 7px;
}
.files .current {
  display: flex;
  align-items: center;
  align-self: end;
  height: 24px;
  padding: 0 12px 0 16px;
  background: #3b4453;
  font-weight: 600;
  clip-path: polygon(10px 0, 100% 0, 88px 100%, 0 100%);
}
.current svg {
  margin-right: 0;
}

/* workspace */
.work {
  display: flex;
  flex: 1;
  min-height: 0;
  background: #3b4453;
}
.toolspace {
  width: 317px;
  padding-top: 6px;
  display: flex;
  flex-direction: column;
}
.toolspace h1 {
  display: flex;
  align-items: center;
  gap: 5px;
  height: 20px;
  line-height: 18px;
  background: #2e3440;
  border-radius: 0 6px 0 0;
  padding-bottom: 2px;
}
.bar {
  display: flex;
  align-items: center;
  gap: 11px;
  height: 31px;
  flex-shrink: 0;
  padding: 0 6px 2px 0;
}
.grow {
  flex: 1;
}
.help {
  width: 16px;
  height: 16px;
  line-height: 16px;
  border-radius: 8px;
  background: #dcdcdc;
  color: #3b4453;
  font-weight: bold;
}
.view {
  position: relative;
  color: #111;
}
.view select {
  display: block;
  width: 100%;
  height: 20px;
  appearance: none;
  border: none;
  border-bottom: 1px solid #8d929a;
  border-radius: 0;
  background: #e1e1e1;
  padding: 0;
  font: 11px "Liberation Sans", Arial, sans-serif;
}
.view svg {
  position: absolute;
  right: 5px;
  top: 8px;
}
.tree {
  flex: 1;
  min-height: 0;
  overflow: hidden;
  margin-top: 2px;
  padding: 2px 0 0 5px;
  background: #fff;
  color: #000;
}
.tree ul {
  padding-left: 19px;
}
.tree li {
  position: relative;
}
.tree li::before {
  content: "";
  position: absolute;
  left: 4px;
  top: 0;
  height: 100%;
  border-left: 1px dotted #777;
}
.tree > li:first-child::before {
  top: 10px;
}
.tree li:last-child::before {
  height: 10px;
}
.tree .more-below::before {
  height: 20px !important;
}
.row {
  display: flex;
  align-items: center;
  gap: 7px;
  height: 20px;
}
.tg {
  position: relative;
  width: 9px;
  height: 9px;
  flex-shrink: 0;
}
.tg::after {
  content: "";
  position: absolute;
  left: 5px;
  top: 4px;
  width: 8px;
  border-top: 1px dotted #777;
}
.minus, .plus, .dot {
  border: 1px solid #8f8f8f;
  background: linear-gradient(#3c5a99, #3c5a99) center / 5px 1px no-repeat, #f4f4f4;
}
.plus {
  background: linear-gradient(#3c5a99, #3c5a99) center / 5px 1px no-repeat, linear-gradient(#3c5a99, #3c5a99) center / 1px 5px no-repeat, #f4f4f4;
}
.dot {
  background: linear-gradient(#444, #444) center / 5px 5px no-repeat, #f4f4f4;
}
.minus::after, .plus::after, .dot::after {
  left: 9px;
  top: 3px;
  width: 3px;
}
.picked {
  gap: 6px;
}
.picked span {
  flex: 1;
  margin-right: 2px;
  padding-left: 2px;
  line-height: 19px;
  background: #a0a0a0;
}
.side {
  width: 20px;
  margin-right: 5px;
  padding-top: 28px;
}
.side a {
  display: flex;
  align-items: center;
  justify-content: center;
  height: 121px;
  writing-mode: vertical-rl;
  transform: rotate(180deg);
  background: #2e3440;
  border: 1px solid #222933;
  border-radius: 5px 0 0 5px;
  color: #b5b9c0;
}
.side .on {
  background: #3b4453;
  color: #f2f2f2;
}
.canvas {
  flex: 1;
  margin-top: 4px;
  padding: 6px 3px;
  background: #212830;
}
.canvas p {
  font-size: 12px;
  line-height: 16px;
}

/* command window */
.command {
  position: relative;
  width: 464px;
  margin: -5px 0 0 383px;
  background: #3b4453;
}
.model {
  height: 79px;
  margin-left: 20px;
  background: #212830;
}
.cmd {
  display: flex;
  margin: 4px 0 0 20px;
  height: 60px;
  border-top: 1px solid #222933;
}
.grip {
  width: 25px;
  flex-shrink: 0;
  display: flex;
  flex-direction: column;
  align-items: center;
  justify-content: space-between;
  padding: 4px 0;
  background: #2b323e;
}
.console {
  flex: 1;
  min-width: 0;
  font: 12px "Liberation Mono", monospace;
  color: #111;
  background: #fff;
}
.console p {
  height: 38px;
  padding: 6px 2px 0;
  font: 12px/15px "Liberation Mono", monospace;
  background: #c8c8c8;
  border-bottom: 1px solid #222;
}
.prompt {
  display: flex;
  align-items: center;
  height: 21px;
  padding-left: 4px;
  white-space: nowrap;
}
.prompt label {
  margin-left: 1px;
}
.prompt input {
  flex: 1;
  min-width: 0;
  border: none;
  padding: 0 0 0 8px;
  background: none;
  outline: none;
}
.status {
  height: 3px;
  margin-top: 4px;
  background: #222933;
}

/* block replace dialogs */
.dialog {
  position: absolute;
  width: 335px;
  height: 279px;
  background: #f0f0f0;
  font: 11px "Liberation Sans", Arial, sans-serif;
  color: #000;
}
.first {
  left: 357px;
  top: 206px;
}
.second {
  left: 887px;
  top: 550px;
  box-shadow: 0 0 0 3px #222933;
}
.dialog header {
  display: flex;
  align-items: center;
  justify-content: space-between;
  height: 30px;
  padding: 0 10px 2px 8px;
  background: #fff;
  font: 12px "Open Sans", "Noto Sans", sans-serif;
}
.dialog label {
  display: block;
  height: 28px;
  padding: 8px 4px 0;
}
.dialog fieldset {
  margin: 0 6px 0 8px;
  padding: 14px 8px 10px;
  border: 1px solid #dcdcdc;
}
.listbox {
  display: flex;
  height: 119px;
  border: 1px solid #000;
  background: #fff;
}
.listbox select {
  flex: 1;
  height: 117px;
  padding: 0;
  border: none;
  border-radius: 0;
  outline: none;
  overflow: hidden;
  background: #fff;
}
.listbox option {
  height: 13px;
  min-height: 13px;
  padding: 1px 2px 0;
  line-height: 12px;
}
.listbox option:checked {
  background: #0078d7 linear-gradient(#0078d7, #0078d7);
  color: #fff;
}
.scroll {
  display: flex;
  flex-direction: column;
  align-items: center;
  width: 17px;
  padding: 7px 0 5px;
  background: #f0f0f0;
}
.scroll i {
  width: 15px;
  height: 17px;
  margin: auto 0 14px;
  background: #cdcdcd;
}
.pick {
  display: flex;
  justify-content: space-between;
  margin-top: 8px;
}
.pick button, .actions button {
  height: 20px;
  border: 1px solid #adadad;
  background: #e1e1e1;
}
.pick button {
  width: 48px;
}
.pick input {
  width: 246px;
  height: 20px;
  padding: 0 1px;
  border: 1px solid #666;
  background: #fff;
}
.actions {
  display: flex;
  justify-content: center;
  gap: 32px;
  margin-top: 8px;
  padding-right: 2px;
}
.actions button {
  width: 64px;
}

/* notes */
.callout {
  position: absolute;
  border: 3px solid #fff200;
  background: #212830;
  color: #fff200;
  font: italic bold 16px/18px "Liberation Sans", Arial, sans-serif;
  white-space: nowrap;
}
.one {
  left: 986px;
  top: 174px;
  width: 269px;
  height: 104px;
  padding: 6px 9px;
}
.two {
  left: 556px;
  top: 621px;
  width: 257px;
  height: 74px;
  padding: 4px 9px;
}
.marks {
  position: absolute;
  left: 0;
  top: 0;
  pointer-events: none;
}
.red {
  fill: none;
  stroke: #ed1c24;
  stroke-width: 3px;
}
.step {
  fill: #ed1c24;
  font: italic bold 20px "Liberation Sans", Arial, sans-serif;
}
.step .wide {
  font-size: 21px;
}
.plain {
  font: 38px "Liberation Sans", Arial, sans-serif;
}
.thin {
  fill: #b4b8bd;
  font: 100 76px Roboto, sans-serif;
}
.thin .green {
  fill: #0a8a30;
}
```
